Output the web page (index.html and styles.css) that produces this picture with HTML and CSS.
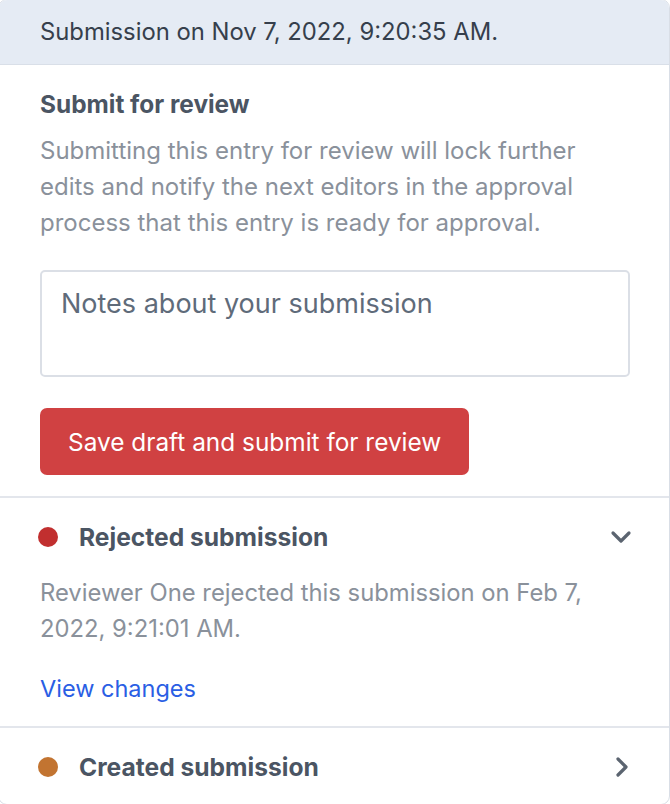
FILE: index.html
```html
<!DOCTYPE html>
<html lang="en">
<head>
<meta charset="utf-8">
<title>Submission</title>
<link rel="stylesheet" href="styles.css">
</head>
<body>
<div class="panel">
  <div class="panel-header">Submission on Nov 7, 2022, 9:20:35 AM.</div>
  <div class="submit-section">
    <h3 class="section-title">Submit for review</h3>
    <p class="section-desc">Submitting this entry for review will lock further edits and notify the next editors in the approval process that this entry is ready for approval.</p>
    <textarea class="notes" placeholder="Notes about your submission"></textarea>
    <button class="submit-btn" type="button">Save draft and submit for review</button>
  </div>
  <div class="event">
    <div class="event-head">
      <span class="dot dot-red"></span>
      <span class="event-title">Rejected submission</span>
      <svg class="chev" width="22" height="14" viewBox="0 0 22 14"><path d="M3 3 L11 11 L19 3" fill="none" stroke="#5b6470" stroke-width="3.2" stroke-linecap="round" stroke-linejoin="round"/></svg>
    </div>
    <p class="event-desc">Reviewer One rejected this submission on Feb 7, 2022, 9:21:01 AM.</p>
    <a class="event-link" href="#">View changes</a>
  </div>
  <div class="event event-last">
    <div class="event-head">
      <span class="dot dot-orange"></span>
      <span class="event-title">Created submission</span>
      <svg class="chev" width="22" height="22" viewBox="0 0 22 22"><path d="M8 3 L16 11 L8 19" fill="none" stroke="#5b6470" stroke-width="3.2" stroke-linecap="round" stroke-linejoin="round"/></svg>
    </div>
  </div>
</div>
</body>
</html>
```
FILE: styles.css
```css
* { box-sizing: border-box; }
html, body { margin: 0; padding: 0; background: #ffffff; }
body { font-family: Inter, "Noto Sans", sans-serif; }

.panel {
  width: 672px;
  height: 806px;
  margin: -1px 0 0 -2px;
  border: 1px solid #d9dee6;
  border-radius: 9px;
  overflow: hidden;
  background: #fff;
}

.panel-header {
  height: 65px;
  background: #e5ebf4;
  border-bottom: 1px solid #d9dfe8;
  padding: 17px 0 0 41px;
  font-size: 23.8px;
  line-height: 30px;
  color: #363f4c;
}

.submit-section {
  padding: 24px 41px 21px 41px;
  border-bottom: 2px solid #e3e6ec;
}

.section-title {
  margin: 0;
  font-size: 24.4px;
  line-height: 30px;
  font-weight: 700;
  color: #4b5563;
}

.section-desc {
  margin: 14px 0 0 0;
  font-size: 24px;
  line-height: 36px;
  color: #8a919b;
  max-width: 575px;
}

.notes {
  display: block;
  width: 590px;
  height: 107px;
  margin-top: 29px;
  padding: 17px 19px;
  border: 2px solid #dbdfe6;
  border-radius: 5px;
  font-family: inherit;
  font-size: 27px;
  line-height: 30px;
  color: #374151;
  resize: none;
}
.notes::placeholder { color: #5f6b7a; opacity: 1; }

.submit-btn {
  display: block;
  margin-top: 31px;
  height: 67px;
  padding: 0 28px;
  background: #d04142;
  border: none;
  border-radius: 7px;
  color: #ffffff;
  font-family: inherit;
  font-size: 24.4px;
}

.event {
  padding: 22px 37px 19px 41px;
  border-bottom: 2px solid #e3e6ec;
}
.event-last { border-bottom: none; padding-top: 22px; }

.event-head {
  display: flex;
  align-items: center;
  height: 34px;
}

.dot {
  width: 20px;
  height: 20px;
  border-radius: 50%;
  flex: none;
  margin-left: -2px;
  margin-right: 21px;
}
.dot-red { background: #c12f2f; }
.dot-orange { background: #c27431; }

.event-title {
  flex: 1;
  font-size: 24.6px;
  font-weight: 700;
  color: #4b5563;
}

.chev { flex: none; }

.event-desc {
  margin: 21px 0 0 0;
  font-size: 23.8px;
  line-height: 36px;
  color: #8a919b;
  max-width: 575px;
}

.event-link {
  display: block;
  margin-top: 24px;
  font-size: 23.5px;
  line-height: 36px;
  color: #2a5ee4;
  text-decoration: none;
}
```
